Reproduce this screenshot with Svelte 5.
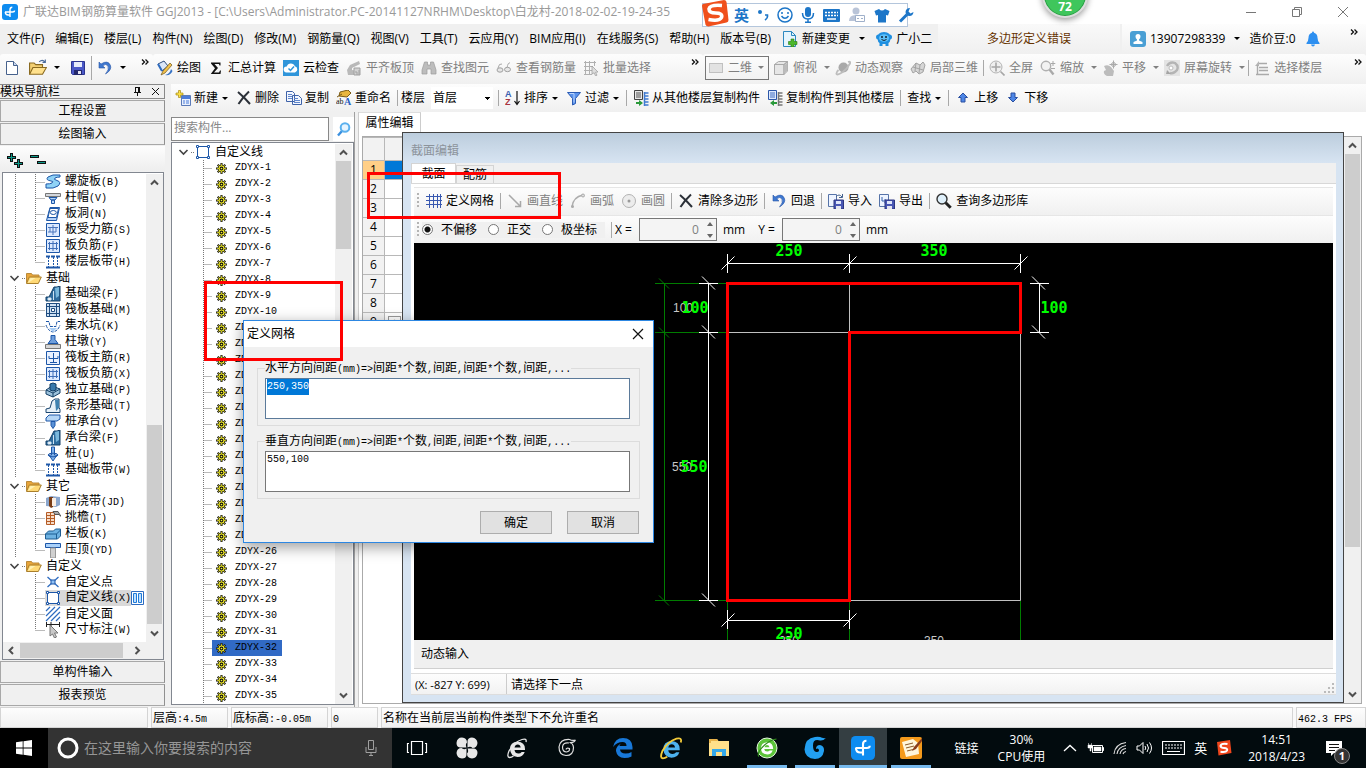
<script>
  import { onMount } from 'svelte';

  const B = '#1d57a8';
  const icons = {
    app: '<rect width="16" height="16" rx="3" fill="#0e8cf0"/><path d="M8 13V5.500q0-2.300 2.300-2.300M3 8h7.500q2 0 2-1.500M3.300 8q0 3 3 3h1.700" fill="none" stroke="#fff" stroke-width="1.400"/>',
    page: '<path d="M2.500 1.500h7l4 4v9h-11z" fill="#fff" stroke="#46618c"/><path d="M9.500 1.500v4h4" fill="#c9d8f0" stroke="#46618c"/>',
    open: '<path d="M.5 13.500v-10h4l1.500 1.500h6v3" fill="#f3cf72" stroke="#8a6a20"/><path d="M.5 13.500l3-6h12l-3.500 6z" fill="#ffe18d" stroke="#8a6a20"/><path d="M9 2.500q3-2.500 5 0M14.500 .5v2.500h-2.500" fill="none" stroke="#4c6c9c"/>',
    folder: '<path d="M.5 13V3.500h5l1 1.500h6.500v2.500" fill="#e8a53a" stroke="#b98a3a"/><path d="M.5 13.500l2.800-6.500h12l-3 6.500z" fill="#ffd976" stroke="#a97f2c"/><path d="M2 13l2.500-5h5z" fill="#fff0b0"/>',
    save: '<path d="M1.500 1.500h13v13h-12l-1-1z" fill="#4a58c8" stroke="#2c3590"/><path d="M4 2h8v5H4z" fill="#e6ebfb"/><path d="M4 10h8v5H4z" fill="#23286c"/><path d="M8 11h3v3H8z" fill="#e4e4f4"/>',
    undo: '<path d="M2 2v6h6L5.700 5.800Q9 3 11 6q1.500 3.500-2.500 8Q15 10 13.500 5.500 11-.5 4 4z" fill="#3f78d0" stroke="#2a57a8" stroke-width=".6"/>',
    paint: '<path d="M1 4l6-3 4 5-6 5z" fill="#dbe6f7" stroke="#2f4c7c"/><path d="M1 4l4 7" stroke="#2f6cc0" stroke-width="2"/><path d="M15 5l-7 8-4 2 2-4 7-8z" fill="#f2c14a" stroke="#6c5420" stroke-width=".7"/><path d="M8 15q5-1 6-6l1.500 2q-2 5-7.500 4z" fill="#3672c4"/>',
    sigma: '<path d="M3 2.500h9.500v3H11.500L11 4H6.500l3.500 4-4 4.500h5l1-2h1l-.5 3.500H2.800L7 8.300 3 3.500z" fill="#111"/>',
    cloud: '<rect width="16" height="16" fill="#2f95da"/><path d="M3.500 12.500a3 3 0 0 1 .3-6 4.200 4.200 0 0 1 8-.2 3.200 3.200 0 0 1 .2 6.200z" fill="#fff"/><path d="M5.500 8.500l2 2 3.500-4" fill="none" stroke="#2f95da" stroke-width="1.500"/>',
    align: '<path d="M1 10l3-5 9-4 1 3-8 4v2l3 .5V15H2z" fill="#b9b9b9"/><path d="M8 8h6v7H8z" fill="#d2d2d2" stroke="#a0a0a0"/><path d="M9 12h2v3M13 10v5" fill="none" stroke="#a0a0a0"/>',
    binoc: '<path d="M3.500 2h3v3h3V2h3l2.500 8v4h-5V9H6v5H1v-4z" fill="#bdbdbd" stroke="#9c9c9c" stroke-width=".7"/>',
    glasses: '<path d="M6 4Q3 3 2 8M14 3q-2-1-3 5" fill="none" stroke="#a9a9a9"/><ellipse cx="4" cy="10" rx="3" ry="2.200" fill="#e6e6e6" stroke="#a0a0a0"/><ellipse cx="11.500" cy="9.500" rx="3" ry="2.200" fill="#e6e6e6" stroke="#a0a0a0"/>',
    batch: '<path d="M1 2.500h12M1 6.500h9M1 10.500h8M1 14.500h8M2.500 1v14M6.500 1v14M11.500 1v5" stroke="#b0b0b0"/><path d="M9 6l6 6-2.500.2 1.500 3-1.500.6-1.400-3L9 14z" fill="#ddd" stroke="#999" stroke-width=".7"/>',
    flat: '<rect x="1.500" y="3.500" width="13" height="9" fill="#e2e2e2" stroke="#c0c0c0"/>',
    cube: '<path d="M1.500 4.500l4-3h9l-3.500 3zM1.500 4.500H11v10H1.500zM11 4.500l3.500-3v9.500l-3.500 3.500z" fill="#e6e6e6" stroke="#a9a9a9"/><path d="M11.500 5l3-2.500v8l-3 3z" fill="#bbb"/>',
    planet: '<circle cx="8.500" cy="7.500" r="5" fill="#a9a9a9"/><path d="M13 2q3-1 2 1.500-2.500 5-8 9-5 3-5.500 1.500T3.500 10" fill="none" stroke="#bdbdbd" stroke-width="1.800"/>',
    local: '<path d="M1 9l5-6 4 2 3-3 2 3-2 7-4 2-3-3-3 2z" fill="#d6d6d6" stroke="#a3a3a3"/><path d="M6 3l-1 8M10 5l-1 8M3 7l10 3" stroke="#a3a3a3"/>',
    full: '<circle cx="7" cy="7" r="6" fill="#efefef" stroke="#b4b4b4"/><path d="M7 2.500v9M2.500 7h9M11.500 11.500l4 4" stroke="#a6a6a6" stroke-width="1.600"/>',
    zoomi: '<circle cx="6" cy="6" r="4.700" fill="#f2f2f2" stroke="#b0b0b0" stroke-width="1.400"/><path d="M9.500 9.500l4 5" stroke="#aaa" stroke-width="2.400"/><path d="M13 1v5M10.800 3.500h4.500M11 8.500h4" stroke="#a8a8a8"/>',
    pan: '<path d="M2 6q4-2 7 1l3 4-1 5H5q-4-2-3-5l2-1z" fill="#bcbcbc"/><path d="M11.500 .5v8M7.500 4.500h8" stroke="#aaa"/><circle cx="11.500" cy="4.500" r="2" fill="none" stroke="#aaa"/>',
    rotate: '<path d="M0 0h16v16H0z" fill="#e4e4e4"/><path d="M3 6q3-5 8-3 4 3 2 7-3 4-7 3" fill="none" stroke="#b4b4b4" stroke-width="2.400"/><path d="M3 10l4 4H2z" fill="#a4a4a4"/><circle cx="7" cy="8" r="2" fill="#fff" stroke="#bbb"/>',
    floor: '<path d="M5 1L1 6h4z" fill="#b5b5b5"/><path d="M3.500 5v9M5 3.500h8M5 7.500h9M5 10.500h9M2 14.500h13" stroke="#aaa" stroke-width="1.400"/>',
    add: '<path d="M6.500 5.500h9v10h-9z" fill="#e9f0fd" stroke="#5b7ab8"/><path d="M7 6h8v3H7z" fill="#4b7cda"/><path d="M8 11h2M11 11h3M8 13h2M11 13h3" stroke="#4b7cda"/><path d="M3.500 .5h2v2.500H8v2H5.500v2.500h-2V5H1V3h2.500z" fill="#ffe34a" stroke="#a58a12" stroke-width=".7"/>',
    x: '<path d="M2 2q6 5 12 12M13 1.500Q7 7 2.500 14" fill="none" stroke="#2b3038" stroke-width="2"/>',
    copy: '<path d="M.5 1.500h6l2 2v8h-8zM6.500 5.500h6l3 3v6h-9z" fill="#f2f6fe" stroke="#3e62a8"/><path d="M2 4.500h4M2 6.500h4M2 8.500h4M8 8.500h4M8 10.500h6M8 12.500h6" stroke="#5f86cc"/>',
    rename: '<path d="M3 6l1-4 8-2 3 3-4 4z" fill="#e9b640" stroke="#7c5c16"/><path d="M1 7l5-3" stroke="#7c5c16"/><text x="0" y="14" font-family="Liberation Serif" font-size="8" fill="#111">ab</text><text x="8" y="15" font-family="Liberation Serif" font-size="10" font-weight="700" fill="#2b5fc0">A</text>',
    az: '<text x="0" y="7" font-family="Liberation Sans" font-size="9" font-weight="700" fill="#3a5fb0">A</text><text x="0" y="15" font-family="Liberation Sans" font-size="9" font-weight="700" fill="#a83440">Z</text><path d="M12 1v13M9.500 11l2.500 3.500 2.500-3.500" fill="none" stroke="#111" stroke-width="1.200"/>',
    filter: '<path d="M1.500 2.500h13L9.500 8.500v5l-3 1.500V8.500z" fill="#5b93ec" stroke="#2c5cb4"/><path d="M3.500 3.500H8v9" fill="none" stroke="#bcd6ff"/>',
    from: '<path d="M1.500 .5h8v9h-8z" fill="#e8e8e8" stroke="#444"/><path d="M3 3h5M3 5h5M3 7h5" stroke="#555"/><path d="M11 3h4.500M11 6h4.500M11 9h4.500M11 12h4.500M11 15h4.500M11.500 2v14" stroke="#3f7ad0" stroke-width="1.500"/><path d="M3 12h3v-2l4 3-4 3v-2H3z" fill="#2a9a3a"/>',
    to: '<path d="M1.500 .5h8v9h-8z" fill="#dfeafd" stroke="#2c57a8"/><path d="M3 3h5M3 5h5M3 7h5" stroke="#3f6cc0"/><path d="M11 3h4.500M11 6h4.500M11 9h4.500M11 12h4.500M11 15h4.500M11.500 2v14" stroke="#777" stroke-width="1.500"/><path d="M10 12H7v-2l-4 3 4 3v-2h3z" fill="#2a9a3a"/>',
    up: '<path d="M8 3l4.500 4.500H10V12H6V7.500H3.500z" fill="#4d86e6" stroke="#2a4fa0"/>',
    down: '<path d="M8 12L3.500 7.500H6V3h4v4.500h2.500z" fill="#4d86e6" stroke="#2a4fa0"/>',
    newdoc: '<path d="M1.500 .5h8l4 4v11h-12z" fill="#e6f5fd" stroke="#2c88c0"/><path d="M9.500 .5v4h4" fill="none" stroke="#2c88c0"/><path d="M9 8h3v2.500h3v3h-3V16H9v-2.500H6.500v-3H9z" fill="#4cb82c" stroke="#2c7a16" stroke-width=".6"/>',
    mascot: '<circle cx="2.500" cy="6" r="2.500" fill="#1f8fe0"/><circle cx="13.500" cy="6" r="2.500" fill="#1f8fe0"/><path d="M8 1q7 0 6.500 7-.3 3-2 4v3H9.500v-2h-3v2h-3v-3q-1.700-1-2-4Q1 1 8 1z" fill="#1f8fe0"/><ellipse cx="8" cy="7" rx="5" ry="3.800" fill="#5cc0f8"/><circle cx="6" cy="6" r="1" fill="#123"/><circle cx="10" cy="6" r="1" fill="#123"/><path d="M5.500 8.500q2.500 2 5 0" stroke="#123" fill="none"/>',
    user: '<rect width="16" height="16" rx="3" fill="#4a9fd4"/><path d="M5.500 5.500a2.500 2.500 0 1 1 5 0q0 2-1.500 3v1l3.500 1.500V13h-9v-2L7 9.500v-1q-1.500-1-1.500-3z" fill="#fff"/>',
    bell: '<path d="M8 .5q1 0 1 1.300 3.500 1 3.500 5 0 3 2 5.200v1H1.500v-1q2-2.200 2-5.200 0-4 3.500-5Q7 .5 8 .5z" fill="#2d8ff0"/><path d="M6 13.500h4q-.5 2-2 2t-2-2z" fill="#2d8ff0"/>',
    search: '<path d="M2 14.500l4-4.500" stroke="#3a8fdf" stroke-width="2.400"/><circle cx="9" cy="6.500" r="4.300" fill="#e6f4ff" stroke="#5ab0ee" stroke-width="2"/>',
    grid: '<path d="M3.500 1v14M7.500 1v14M11.500 1v14M14.500 1v14M0 3.500h16M0 7.500h16M0 11.500h16" stroke="#3858b0"/>',
    line: '<path d="M2 2l11 11M13.500 8v5.500H8" fill="none" stroke="#a8a8a8" stroke-width="1.500"/>',
    arc: '<path d="M2 14Q3 4 13 2" fill="none" stroke="#adadad" stroke-width="1.600"/><circle cx="13" cy="2.500" r="1.500" fill="#ddd" stroke="#aaa"/><circle cx="2.500" cy="13.500" r="1.500" fill="#aaa"/>',
    circ: '<circle cx="8" cy="8" r="6.500" fill="#ececec" stroke="#b2b2b2"/><circle cx="8" cy="8" r="1.500" fill="#999"/>',
    imp: '<path d="M.5 1.500h8v12h-8z" fill="#eef4ff" stroke="#5673a8"/><path d="M6 7h9.500v9H6z" fill="#4957b4" stroke="#2c3580"/><path d="M8 8h5v3H8z" fill="#dfe6fa"/><path d="M8 13h5v3H8z" fill="#e6e6ee"/><path d="M8 4q3-4 6 0M14.500 1v3.500H11" fill="none" stroke="#44618e"/>',
    exp: '<path d="M.5 1.500h9v12h-9z" fill="#eef4ff" stroke="#5673a8"/><path d="M3 4v4h4M5.500 6l2 2-2 2" fill="none" stroke="#3461ac"/><path d="M6 7h9.500v9H6z" fill="#4957b4" stroke="#2c3580"/><path d="M8 8h5v3H8z" fill="#dfe6fa"/><path d="M8 13h5v3H8z" fill="#e6e6ee"/>',
    query: '<circle cx="6" cy="6" r="5" fill="#dff0fb" stroke="#333" stroke-width="1.400"/><path d="M9.700 9.700l5 5" stroke="#222" stroke-width="3"/>',
    box: `<path d="M2.500 2.500h11v11h-11z" fill="#fff" stroke="${B}"/><path d="M1.500 1.500h2v2h-2zM12.500 1.500h2v2h-2zM1.500 12.500h2v2h-2zM12.500 12.500h2v2h-2z" fill="#fff" stroke="${B}"/>`,
    gear: '<path d="M8 0v16M0 8h16M2.500 2.500l11 11M13.500 2.500l-11 11" stroke="#111" stroke-width="3"/><circle cx="8" cy="8" r="5" fill="#f4ee2c" stroke="#111"/><path d="M8 1v14M1 8h14M3.200 3.200l9.600 9.600M12.800 3.200l-9.600 9.600" stroke="#f0ea24"/><circle cx="8" cy="8" r="2" fill="#f6f040" stroke="#111" stroke-width="1.500"/>',
    spiral: `<path d="M15 1Q7 0 3 3 0 6 6 7q3 0 1 2-2 1-6 1v4q8 1 12-2 4-4-1-5.500Q8 5.500 10 4q2-1 5-1z" fill="#8fd2f6" stroke="${B}"/>`,
    cap: `<path d="M.5 3.500h15v3H.5z" fill="#d2d6dc" stroke="#777"/><path d="M4 7.500h8l-2 2.500H6zM6.500 10h3v3.500h-3z" fill="#b6d5f7" stroke="${B}"/>`,
    hole: `<path d="M5 1.500h9.500l-3 13h-10z" fill="#b4d2fa" stroke="${B}"/><path d="M5 2.500h8.500l-2 9H3z" fill="#fff" stroke="${B}"/><ellipse cx="8.300" cy="6.500" rx="3" ry="2" fill="#fff" stroke="${B}"/>`,
    rebarA: `<path d="M1.500 1.500h13v13h-13z" fill="#dceaff" stroke="${B}"/><path d="M3 5.500h10M8 3v10M5 6v4h-2M11 6v4H5" fill="none" stroke="#4a76bc"/>`,
    rebarB: `<path d="M1.500 1.500h13v13h-13z" fill="#dceaff" stroke="${B}"/><path d="M3 5.500h10M3 10.500h10M8 3v10M4.500 4v8M11.500 4v8" stroke="#3f6fb8"/>`,
    rebarC: `<path d="M1.500 1.500h13v13h-13z" fill="#eaf2ff" stroke="${B}"/><path d="M8.500 3v10M4 6v2.500h9V6M5 12.500h7" fill="none" stroke="${B}"/>`,
    strip: `<path d="M1 2.500h4M6 2.500h4M11 2.500h4M1 13.500h14" stroke="${B}" stroke-width="2"/><path d="M3.500 3v10M8.500 3v10M12.500 3v10" stroke="${B}" stroke-dasharray="2 1"/>`,
    beam: `<path d="M1 15V11h3L9 1h3l3-1v15z" fill="#2e6c9e" stroke="#123e66"/><path d="M10 2l4-1v9l-3 2z" fill="#7ab8dc"/><path d="M3 14v-2h3v2zM8.500 5v9" fill="#fff" stroke="#cfe3f2"/>`,
    raft: `<path d="M1.500 1.500h13v13h-13z" fill="#cfe2f4" stroke="#1e4c80"/><path d="M4.500 1v14M11.500 1v14M1 4.500h14M1 11.500h14" stroke="#1e4c80"/><path d="M6.500 6.500h3v3h-3z" fill="#fff" stroke="#1e4c80"/>`,
    pit: `<path d="M1 3.500h3l1 5h6l1-5h3M1 7q2 6 7 7 5-1 7-7" fill="none" stroke="${B}" stroke-dasharray="3 1"/><path d="M4 10l4 4 4-4z" fill="#a8cdf5"/>`,
    pier: `<path d="M6 1.500h4v4l3 4H3l3-4z" fill="#6f9fdc" stroke="${B}"/><path d="M.5 10.500h15v4H.5z" fill="#d6d6d6" stroke="#777"/>`,
    foot: '<path d="M1 8l6-4 8 3v4l-7 4-7-3z" fill="#9cc2dc" stroke="#123e66"/><path d="M5 2l3-1 3 1v6L8 9 5 8z" fill="#3a7aac" stroke="#123e66"/><path d="M1 8l7 3 7-4M8 11v4" fill="none" stroke="#123e66"/>',
    strap: '<path d="M1 14.500V11l4-1 2-7 3-2h4v9l1 1v3.500z" fill="#e7f1f8" stroke="#1b4670"/><path d="M10 2h4v8l-3 3z" fill="#3f82b0"/>',
    pilecap: `<path d="M1 4l3-3h11v4l-3 2H1z" fill="#b7d7f6" stroke="${B}"/><path d="M6 7.500h4v4l-2 3-2-3z" fill="#5b91d6" stroke="${B}"/>`,
    pile: `<path d="M6.500 1h3v8H12l-4 6-4-6h2.500z" fill="#7fb0ea" stroke="${B}"/><ellipse cx="8" cy="9" rx="5" ry="1.800" fill="none" stroke="${B}"/>`,
    pour: '<path d="M1 4l5-2 9 1v8l-4 2-10-1z" fill="#8ba6cc"/><path d="M4 3h4v10l-2 1-2-2z" fill="#7a3c14"/><path d="M7 4h4v8H7z" fill="#fbeee2"/>',
    eave: '<path d="M1.500 2.500h8v12h-8z" fill="#f7dcc8" stroke="#b55c26"/><path d="M1.500 5.500h8M1.500 8.500h8M1.500 11.500h8M5.500 2.500v12" stroke="#b55c26"/><path d="M8 1.500h5l3 5-2-2h-4z" fill="#aaa" stroke="#555"/>',
    rail: '<path d="M.5 8l3-3h5l2-2h5v7l-3 3H.5z" fill="#6db2e2" stroke="#1d5c92"/><path d="M.5 8h11v5M11.500 8l4-4" fill="none" stroke="#1d5c92"/>',
    coping: `<path d="M.5 1.500h15v4H.5z" fill="#a8d0fa" stroke="${B}"/><path d="M5.500 6h5v10h-5z" fill="#d0d0d0" stroke="#999"/>`,
    pt: `<path d="M2.500 3l11 10M13.500 3l-11 10" stroke="#2d6bc0" stroke-width="1.300"/><path d="M6 6h4v4H6z" fill="#8fc0f4" stroke="${B}"/>`,
    hatch: '<path d="M1 5l4-4M1 10l9-9M1 15L15 1M6 15l9-9M11 15l4-4" stroke="#2d6bc0" stroke-width="1.200"/>',
    dim: '<path d="M1.500 0v5M14.500 0v5M6 0v5M1 2.500h14" stroke="#222"/><path d="M5 3l8 8H9.500l2 4-2 1-2-4L5 14z" fill="#c9c9c9" stroke="#777"/>'
  };

  const menus = ['文件(F)', '编辑(E)', '楼层(L)', '构件(N)', '绘图(D)', '修改(M)', '钢筋量(Q)', '视图(V)', '工具(T)', '云应用(Y)', 'BIM应用(I)', '在线服务(S)', '帮助(H)', '版本号(B)'];

  const drawTools = [
    ['paint', '绘图'], ['sigma', '汇总计算'], ['cloud', '云检查'],
    ['align', '平齐板顶', 1], ['binoc', '查找图元', 1], ['glasses', '查看钢筋量', 1], ['batch', '批量选择', 1]
  ].map(([icon, label, off]) => ({ icon, label, off }));

  const viewTools = [
    { icon: 'cube', label: '俯视', drop: true, off: 1 },
    { icon: 'planet', label: '动态观察', off: 1 },
    { icon: 'local', label: '局部三维', off: 1 },
    { sep: true },
    { icon: 'full', label: '全屏', off: 1 },
    { icon: 'zoomi', label: '缩放', drop: true, off: 1 },
    { icon: 'pan', label: '平移', drop: true, off: 1 },
    { icon: 'rotate', label: '屏幕旋转', drop: true, off: 1 },
    { sep: true },
    { icon: 'floor', label: '选择楼层', off: 1 }
  ];

  const partTools = [
    { icon: 'add', label: '新建', drop: true },
    { icon: 'x', label: '删除' },
    { icon: 'copy', label: '复制' },
    { icon: 'rename', label: '重命名' },
    { sep: true }
  ];

  const partTools2 = [
    { sep: true },
    { icon: 'az', label: '排序', drop: true },
    { icon: 'filter', label: '过滤', drop: true },
    { sep: true },
    { icon: 'from', label: '从其他楼层复制构件' },
    { icon: 'to', label: '复制构件到其他楼层' },
    { sep: true },
    { label: '查找', drop: true },
    { sep: true },
    { icon: 'up', label: '上移' },
    { icon: 'down', label: '下移' }
  ];

  const tree = [
    { items: [['spiral', '螺旋板(B)'], ['cap', '柱帽(V)'], ['hole', '板洞(N)'], ['rebarA', '板受力筋(S)'], ['rebarB', '板负筋(F)'], ['strip', '楼层板带(H)']] },
    { name: '基础', items: [['beam', '基础梁(F)'], ['raft', '筏板基础(M)'], ['pit', '集水坑(K)'], ['pier', '柱墩(Y)'], ['rebarC', '筏板主筋(R)'], ['rebarB', '筏板负筋(X)'], ['foot', '独立基础(P)'], ['strap', '条形基础(T)'], ['pilecap', '桩承台(V)'], ['beam', '承台梁(F)'], ['pile', '桩(U)'], ['strip', '基础板带(W)']] },
    { name: '其它', items: [['pour', '后浇带(JD)'], ['eave', '挑檐(T)'], ['rail', '栏板(K)'], ['coping', '压顶(YD)']] },
    { name: '自定义', items: [['pt', '自定义点'], ['box', '自定义线(X)'], ['hatch', '自定义面'], ['dim', '尺寸标注(W)']] }
  ];

  const parts = Array.from({ length: 35 }, (_, i) => i + 1).filter((n) => n !== 18);
  const rows = Array.from({ length: 9 }, (_, i) => i + 1);

  const ticksTop = [727.5, 849.5, 1020.5];
  const ticksSide = [283.5, 332.5, 600.5];

  let horizontal = $state('250,350');
  let vertical = $state('550,100');
  let offset = $state('none');
  let first;

  onMount(() => {
    first.focus();
    first.select();
  });
</script>

{#snippet icon(name, size = 16)}<svg class="ic" width={size} height={size} viewBox="0 0 16 16" aria-hidden="true">{@html icons[name]}</svg>{/snippet}

{#snippet mix(text)}{#each text.split(/([\x20-\x7e]+)/) as part, i}{#if part}<span class={i % 2 ? 'latin' : 'han'}>{part}</span>{/if}{/each}{/snippet}

{#snippet tool(t)}{#if t.sep}<i class="sep"></i>{:else}<button class="tool" class:off={t.off}>{#if t.icon}{@render icon(t.icon)}{/if}<span>{t.label}</span>{#if t.drop}<i class="drop"></i>{/if}</button>{/if}{/snippet}

{#snippet chev(d)}<svg width="17" height="17" viewBox="0 0 17 17" aria-hidden="true"><path {d} fill="none" stroke="#505050" stroke-width="2" /></svg>{/snippet}

{#snippet vscroll(a, b, c)}
  <div class="vscroll">
    {@render chev('M5 10.500l3.500-3.500 3.500 3.500')}
    <i style="flex:{a}"></i><i class="thumb" style="flex:{b}"></i><i style="flex:{c}"></i>
    {@render chev('M5 6.500l3.500 3.500 3.500-3.500')}
  </div>
{/snippet}

{#snippet more()}<svg class="more" width="8" height="7" viewBox="0 0 8 7" aria-hidden="true"><path d="M1 .5l2.500 2.500L1 5.500M4.500 .5L7 3 4.500 5.500" fill="none" stroke="#111" stroke-width="1.300" /></svg>{/snippet}

<div class="app">
  <header class="titlebar">
    {@render icon('app')}
    <h1>广联达BIM钢筋算量软件 GGJ2013 - [C:\Users\Administrator.PC-20141127NRHM\Desktop\白龙村-2018-02-02-19-24-35</h1>
    <div class="winctl">
      <button aria-label="最小化"><svg width="12" height="12"><path d="M1 6.500h10" stroke="#777" /></svg></button>
      <button aria-label="还原"><svg width="12" height="12"><path d="M1.500 3.500h7v7h-7zM3.500 3.500v-2h7v7h-2" fill="none" stroke="#777" /></svg></button>
      <button aria-label="关闭"><svg width="12" height="12"><path d="M1 1l10 10M11 1L1 11" stroke="#777" /></svg></button>
    </div>
  </header>

  <nav class="menubar">
    <div class="menus">
      {#each menus as m}<button>{m}</button>{/each}
      <button class="tool">{@render icon('newdoc')}<span>新建变更</span><i class="drop wide"></i></button>
      <button class="tool">{@render icon('mascot')}<span>广小二</span></button>
    </div>
    <div class="notice">多边形定义错误</div>
    <div class="account">
      <button class="tool">{@render icon('user')}<span>13907298339</span><i class="drop wide"></i></button>
      <span>造价豆:0</span>
      {@render icon('bell')}
      {@render more()}
    </div>
  </nav>

  <div class="toolbar">
    <div class="band files">
      {@render icon('page')}
      <span class="pair">{@render icon('open', 18)}<i class="drop"></i></span>
      {@render icon('save')}
      <i class="sep"></i>
      <span class="pair">{@render icon('undo')}<i class="drop"></i></span>
      {@render more()}
    </div>
    <div class="band draw">
      {#each drawTools as t}{@render tool(t)}{/each}
      {@render more()}
    </div>
    <div class="band view">
      <button class="tool off combo2d">{@render icon('flat')}<span>二维</span><i class="drop"></i></button>
      {#each viewTools as t}{@render tool(t)}{/each}
      {@render more()}
    </div>
  </div>

  <main>
    <aside class="nav">
      <div class="navhead">
        <span>模块导航栏</span>
        <svg width="9" height="9" viewBox="0 0 9 9" aria-hidden="true"><path d="M2.500 0v5M2 .5h4.500M5.500 0v5M6.500 0v5M1 5.500h7M4.500 6v3" fill="none" stroke="#111" /></svg>
        <svg width="9" height="9" viewBox="0 0 9 9" aria-hidden="true"><path d="M1 1l7 7M8 1L1 8" stroke="#111" /></svg>
      </div>
      <button class="wide">工程设置</button>
      <button class="wide">绘图输入</button>
      <div class="expand">
        <svg width="40" height="18" viewBox="0 0 40 18" aria-hidden="true"><path d="M0 5.500h9M4.500 1v9M7 11.500h9M11.500 7v9M23 4.500h9M30 10.500h9" stroke="#111" stroke-width="3" /><path d="M1 5.500h7M4.500 2v7M8 11.500h7M11.500 8v7M24 4.500h7M31 10.500h7" stroke="#0b9a8a" /></svg>
      </div>
      <div class="treebox">
        <div class="treeview">
          <ul class="tree">
            {#each tree as g, gi}
              {#if g.name}
                <li>
                  <svg width="23" height="16" aria-hidden="true"><path d="M7.500 6l4 4 4-4" fill="none" stroke="#444" stroke-width="1.600" /><path d="M19 8.500h4" stroke="#777" stroke-dasharray="1 1" /></svg>
                  {@render icon('folder')}<span class="label">{g.name}</span>
                </li>
              {/if}
              {#each g.items as [ic, name], i}
                <li class:picked={ic === 'box'}>
                  <svg width="42" height="16" aria-hidden="true"><path d="{gi < 3 ? 'M12.500 0V16' : ''}M32.500 0V{i === g.items.length - 1 ? 8 : 16}M32.500 8.500H42" stroke="#777" stroke-dasharray="1 1" /></svg>
                  <span class="hit">{@render icon(ic)}<span class="label">{@render mix(name)}</span></span>
                  {#if ic === 'box'}<svg class="cols" width="13" height="14" aria-hidden="true"><path d="M.5 .5h12v13H.5z" fill="#fff" stroke="#2d6bc0" /><path d="M2.500 2.500h3v9h-3zM7.500 2.500h3v9h-3z" fill="#bfe0ff" stroke="#1f7ad8" /></svg>{/if}
                </li>
              {/each}
            {/each}
          </ul>
          {@render vscroll(235, 199, 1)}
        </div>
        <div class="hscroll">
          {@render chev('M10 5L6.500 8.500 10 12')}
          <i class="thumb" style="flex:102"></i><i style="flex:6"></i>
          {@render chev('M6.500 5l3.500 3.500L6.500 12')}
          <i class="corner"></i>
        </div>
      </div>
      <button class="wide">单构件输入</button>
      <button class="wide">报表预览</button>
    </aside>

    <section class="work">
      <div class="parttools">
        {#each partTools as t}{@render tool(t)}{/each}
        <label for="floor">楼层</label>
        <select id="floor"><option>首层</option></select>
        {#each partTools2 as t}{@render tool(t)}{/each}
      </div>
      <div class="panes">
        <div class="partlist">
          <div class="find">
            <input aria-label="搜索构件" placeholder="搜索构件..." />
            <button aria-label="搜索">{@render icon('search')}</button>
          </div>
          <div class="partbox">
            <ul class="parts">
              <li class="root">
                <svg width="23" height="16" aria-hidden="true"><path d="M7.500 6l4 4 4-4" fill="none" stroke="#444" stroke-width="1.600" /><path d="M19 8.500h4" stroke="#777" stroke-dasharray="1 1" /></svg>
                {@render icon('box')}<span class="label">自定义线</span>
              </li>
              {#each parts as n}
                <li class:sel={n === 32}>
                  <svg width="40" height="16" aria-hidden="true"><path d="M31.500 0V16M31.500 8.500H40" stroke="#777" stroke-dasharray="1 1" /></svg>
                  <span class="hit">{@render icon('gear', 11)}<span class="latin">ZDYX-{n}</span></span>
                </li>
              {/each}
            </ul>
            {@render vscroll(0, 88, 437)}
          </div>
        </div>
        <div class="props">
          <div class="proptab">属性编辑</div>
          <div class="propbox">
            <table>
              <thead><tr><th></th><th></th></tr></thead>
              <tbody>
                {#each rows as r}<tr class:cur={r === 1}><th>{r}</th><td>{#if r === 9}<i class="plus">+</i>{/if}</td></tr>{/each}
              </tbody>
            </table>
            {@render vscroll(0, 388, 137)}
          </div>
        </div>
      </div>
    </section>
  </main>

  <footer class="status">
    <span class="c1"></span>
    <span class="c2">{@render mix('层高:4.5m')}</span>
    <span class="c3">{@render mix('底标高:-0.05m')}</span>
    <span class="c4">{@render mix('0')}</span>
    <span class="c5">名称在当前层当前构件类型下不允许重名</span>
    <span class="c6">{@render mix('462.3 FPS')}</span>
  </footer>

  <footer class="taskbar">
    <button class="start" aria-label="开始"><svg width="16" height="16" viewBox="0 0 16 16"><path d="M0 2.300L6.700 1.300v6.200H0zM7.500 1.200L16 0v7.500H7.500zM0 8.400h6.700v6.300L0 13.800zM7.500 8.400H16V16l-8.500-1.200z" fill="#fff" /></svg></button>
    <div class="cortana">
      <svg width="22" height="22" aria-hidden="true"><circle cx="11" cy="11" r="9" fill="none" stroke="#fff" stroke-width="3" /></svg>
      <input aria-label="搜索" placeholder="在这里输入你要搜索的内容" />
      <svg width="12" height="18" viewBox="0 0 12 18" aria-hidden="true"><path d="M3.500 1.500h5v9h-5zM1 8v5.500h10V8M6 14v3M4 16.500h4" fill="none" stroke="#a0a0a0" /></svg>
    </div>
    <div class="apps first">
      <button aria-label="任务视图"><svg width="22" height="16"><path d="M5.500 1.500h11v13h-11zM3 3.500H1.500v9H3M19 3.500h1.500v9H19" fill="none" stroke="#fff" stroke-width="1.200" /></svg></button>
      <button aria-label="四叶"><svg width="22" height="22" viewBox="0 0 22 22"><g fill="#e8e8e8"><path d="M10.500 10.500H4Q.5 10 .5 6 1 .5 6 .5q5 .5 5 5-2 2-.5 5z" /><path d="M11.500 10.500V4Q12 .5 16 .5q5 .5 5.500 5.500-.5 5-5 5-2-2-5-.5z" /><path d="M11.500 11.500H18q3.500.5 3.500 4.500-.5 5-5.500 5.500-5-.5-5-5 2-2 .5-5z" /><path d="M10.500 11.500V18q-.5 3.500-4.500 3.500-5-.5-5.500-5.500.5-5 5-5 2 2 5 .5z" /></g></svg></button>
      <button aria-label="浏览器"><svg width="22" height="22" viewBox="0 0 22 22"><path d="M4 12q0-7 7.500-7.500Q19 5 19 12v1H8.500q.5 3.500 4 3.500 2 0 3.200-1.500h3Q17 20 11.500 20 4.500 19.500 4 12zm4.500-1.500h6.200q-.5-3-3-3t-3.200 3z" fill="#e8e8e8" /><path d="M20 5q1-4-4-2.500Q8 5 3 14q-2.500 6 .5 6.500 2 0 4-1.500" fill="none" stroke="#e8e8e8" stroke-width="1.300" /></svg></button>
      <button aria-label="G"><svg width="20" height="20" viewBox="0 0 20 20"><path d="M18.500 2q-3 1-6-.5Q3 1 2 9q0 8 7 8.500 7.500 0 7.500-8Q16 5 12.500 4.500 17 5 18.500 2M12 5Q6 4 5.500 9q0 5 4 5 3.500-.5 3-3.500-3-1-3.500 1" fill="none" stroke="#e0e0e0" stroke-width="1.200" /></svg></button>
    </div>
    <div class="apps second">
      <button aria-label="Edge"><svg width="22" height="22" viewBox="0 0 22 22"><path d="M1 10Q3 1 11 1q9 0 9.500 9v2.500H8q.5 4 5.500 4 3.500 0 6-1.500v4.500q-3 1.500-7 1.500Q5 20.500 4 14q0-5 5-7.500Q7.500 7.500 7.500 9h7q0-4-4-4Q5 5 1 10z" fill="#1878d8" /></svg></button>
      <button aria-label="IE"><svg width="24" height="24" viewBox="0 0 22 22"><path d="M4 12q0-7 7.500-7.500Q19 5 19 12v1H8.500q.5 3.500 4 3.500 2 0 3.200-1.500h3Q17 20 11.500 20 4.500 19.500 4 12zm4.500-1.500h6.200q-.5-3-3-3t-3.200 3z" fill="#4db2ee" /><path d="M20 6q1.500-5-4-3.500Q8 5 3 14q-2.500 6 .5 6.500 2 0 4-1.500" fill="none" stroke="#f4cc3a" stroke-width="1.700" /></svg></button>
      <button aria-label="文件资源管理器"><svg width="22" height="20" viewBox="0 0 22 20"><path d="M1 1h8l1.500 2H21v15H1z" fill="#ffe08a" /><path d="M1 1h8l1 2H3v2H1z" fill="#e8b34a" /><path d="M4 18v-7h14v7h-4v-4H8v4z" fill="#35a8e8" /></svg></button>
      <button class="run" aria-label="360浏览器"><svg width="22" height="22" viewBox="0 0 22 22"><circle cx="11" cy="11" r="10" fill="#5cc43a" stroke="#e6f8e0" /><path d="M5 11.500q0-6 6-6.200 6 .2 6.200 6.700h-9q.3 2.500 3 2.500 1.500 0 2.500-1h3q-1.500 4-5.500 4-6-.2-6.200-6zm3.500-1.200h5q-.5-2.200-2.500-2.200t-2.500 2.200z" fill="#fff" /><path d="M20.500 2Q12 3 4 13q-3 5-1 6.500" fill="none" stroke="#2f8a1c" stroke-width="1.200" /></svg></button>
      <button class="run" aria-label="广联达"><svg width="24" height="24" viewBox="0 0 24 24"><path d="M23 2q-3 3-6 2.500-7-2-7 5 0 7 4 6.500 3-.5 1.500-3-1-1-2.500 0 0-4 4-4 4.500 1 4 6-1.500 8-9 8-10-.5-10.500-9.500Q2 2 12 1q5-.5 7 .8Q21 2.500 23 2z" fill="#229ff0" /></svg></button>
      <button class="run on" aria-label="GGJ2013">{@render icon('app', 24)}</button>
      <button class="run" aria-label="便笺"><svg width="24" height="24" viewBox="0 0 24 24"><rect x="1" y="1" width="22" height="22" rx="2" fill="#f49a1c" /><path d="M3 6l11-3 5 4 1 11-13 3z" fill="#fff6dc" /><path d="M6 9l8-2M7 12l8-2M8 15l6-1.500" stroke="#8a5a2a" /><path d="M23 2l-8 9-2 4 4-2 6-8z" fill="#8a3c1a" /></svg></button>
    </div>
    <div class="tray">
      <span class="link">链接</span>
      <span class="two">30%<br />CPU使用</span>
      <svg class="caret" width="14" height="8" aria-hidden="true"><path d="M1 7l6-5.500L13 7" fill="none" stroke="#fff" stroke-width="1.300" /></svg>
      <svg class="bat" width="17" height="14" viewBox="0 0 17 14" aria-hidden="true"><path d="M5.500 4.500h10v7h-10z" fill="none" stroke="#fff" /><path d="M7 6h7v4H7zM16 6.500h1v3h-1zM1 4h4v3H4v3H3V7H1zM1.500 2v2M4.500 2v2" fill="#fff" stroke="#fff" stroke-width=".5" /></svg>
      <svg width="14" height="14" viewBox="0 0 14 14" aria-hidden="true"><path d="M1 13Q2 3 13 1.500M4 13Q5 6 13 4.500M7 13q1-5 6-5.500M10 13q.5-2 3-2.500" fill="none" stroke="#ddd" stroke-width="1.100" /></svg>
      <svg width="17" height="14" viewBox="0 0 17 14" aria-hidden="true"><path d="M1 5h2.500L7 1.500v11L3.500 9H1zM9 5q1.500 2 0 4M11 3q3 4 0 8M13.500 1.500q4 5.500 0 11" fill="none" stroke="#fff" /></svg>
      <svg width="23" height="14" viewBox="0 0 23 14" aria-hidden="true"><path d="M.5 .5h22v13H.5z" fill="none" stroke="#fff" stroke-width="1.200" /><path d="M3 4h17M3 7h17" stroke="#fff" stroke-dasharray="2 1" /><path d="M5 10.500h13" stroke="#fff" /></svg>
      <span class="ime">英</span>
      <svg width="16" height="16" viewBox="0 0 16 16" aria-hidden="true"><path d="M1 2l13-2 1.500 13-13 2.500z" fill="#f0461c" /><path d="M11.500 4Q5 3 4.500 6q.5 2 3.500 2 4 .3 3 2.500-1 2-6.500 1.200" fill="none" stroke="#fff" stroke-width="2" /></svg>
      <span class="two time">14:51<br />2018/4/23</span>
      <svg class="note" width="26" height="26" viewBox="0 0 26 26" aria-hidden="true"><path d="M1 1h16v12H9l-3 3v-3H1z" fill="#fff" /><path d="M4 4.500h10M4 7.500h10M4 10.500h6" stroke="#111" /><circle cx="17" cy="16" r="7.500" fill="#333" stroke="#888" /><text x="17" y="20" font-family="Open Sans" font-size="11" font-weight="700" fill="#fff" text-anchor="middle">1</text></svg>
    </div>
  </footer>

  <section class="editor" aria-label="截面编辑">
    <h2>截面编辑</h2>
    <div class="client">
      <div class="tabs"><button class="on">截面</button><button>配筋</button></div>
      <div class="edit">
        <div class="edtools">
          <i class="grip"></i>
          {@render tool({ icon: 'grid', label: '定义网格' })}
          <i class="sep"></i>
          {@render tool({ icon: 'line', label: '画直线', off: 1 })}
          {@render tool({ icon: 'arc', label: '画弧', off: 1 })}
          {@render tool({ icon: 'circ', label: '画圆', off: 1 })}
          <i class="sep"></i>
          {@render tool({ icon: 'x', label: '清除多边形' })}
          <i class="sep"></i>
          {@render tool({ icon: 'undo', label: '回退' })}
          <i class="sep"></i>
          {@render tool({ icon: 'imp', label: '导入' })}
          {@render tool({ icon: 'exp', label: '导出' })}
          <i class="sep"></i>
          {@render tool({ icon: 'query', label: '查询多边形库' })}
        </div>
        <div class="edtools coords">
          <i class="grip"></i>
          <div class="radios">
            <label><input type="radio" bind:group={offset} value="none" />不偏移</label>
            <label><input type="radio" bind:group={offset} value="ortho" />正交</label>
            <label><input type="radio" bind:group={offset} value="polar" />极坐标</label>
          </div>
          <i class="sep"></i>
          {#each ['X', 'Y'] as axis}
            <label class="axis" for="axis{axis}">{axis} =</label>
            <span class="spin"><input id="axis{axis}" value="0" /><svg width="8" height="16" aria-hidden="true"><path d="M4 0l3 4H1zM4 16l3-4H1z" fill="#666" /></svg></span>
            <span class="unit">mm</span>
          {/each}
        </div>
        <svg class="canvas" aria-label="截面图">
          <g transform="translate(-414 -243)" fill="none">
            <g stroke="#007c00">
              <path d="M664.500 283V601M655 283.500h72M655 332.500h72M655 600.500h72M727.500 601v40M849.500 601v40M1020.500 601v40" />
              {#each ticksSide as y}<path d="M659 {y - 5}l10 10" />{/each}
            </g>
            <path d="M849.500 283v49M727 332.500h122M1020.500 332V600.500H849" stroke="#c0c0c0" />
            <g stroke="#fff">
              <path d="M727.500 263.500h293M708.500 283v318M727.500 620.500h122M1039.500 283v50" />
              {#each ticksTop as x}<path d="M{x} 254v19M{x - 6} 269.500l13-13" />{/each}
              {#each ticksSide as y}<path d="M699 {y}h19M702 {y - 7}l13 13" />{/each}
              {#each ticksTop.slice(0, 2) as x}<path d="M{x} 610v19M{x - 6} 626.500l13-13" />{/each}
              {#each ticksSide.slice(0, 2) as y}<path d="M1030 {y}h19M1032 {y - 7}l13 13" />{/each}
            </g>
            <path d="M727.500 283.500h293v49h-171v268h-122z" stroke="#f00" stroke-width="3" />
            <g class="grey"><text x="683" y="312">100</text><text x="682" y="471">550</text><text x="789" y="645">250</text><text x="934" y="645">350</text></g>
            <g class="green"><text x="789" y="256">250</text><text x="934" y="256">350</text><text x="695" y="313">100</text><text x="1054" y="313">100</text><text x="694" y="472">550</text><text x="789" y="639">250</text></g>
          </g>
        </svg>
        <div class="dyn">动态输入</div>
      </div>
      <div class="edstatus">
        <span class="xy">(X: -827 Y: 699)</span><span class="prompt">请选择下一点</span>
        <svg width="12" height="12" aria-hidden="true"><path d="M8 1h2v2H8zM4 5h2v2H4zM8 5h2v2H8zM0 9h2v2H0zM4 9h2v2H4zM8 9h2v2H8z" fill="#bbb" /></svg>
      </div>
    </div>
  </section>

  <section class="dialog" role="dialog" aria-label="定义网格">
    <header><span>定义网格</span><button aria-label="关闭"><svg width="12" height="12"><path d="M1 1l10 10M11 1L1 11" stroke="#111" stroke-width="1.200" /></svg></button></header>
    <fieldset><legend><label for="hgap">{@render mix('水平方向间距(mm)=>间距*个数,间距,间距*个数,间距,...')}</label></legend><textarea id="hgap" bind:this={first} bind:value={horizontal}></textarea></fieldset>
    <fieldset><legend><label for="vgap">{@render mix('垂直方向间距(mm)=>间距*个数,间距,间距*个数,间距,...')}</label></legend><textarea id="vgap" bind:value={vertical}></textarea></fieldset>
    <div class="actions"><button>确定</button><button>取消</button></div>
  </section>

  <div class="sogou">
    <svg class="slogo" width="28" height="28" viewBox="0 0 28 28" aria-hidden="true"><path d="M2 5l21-4q2 0 2.500 2l2 18q0 2-2 2.500l-18 4q-2.500 0-3-2L1 7q0-1.500 1-2z" fill="#f0501c" /><path d="M21 6.500q-12-1-13 3.500 0 4 6.500 4 7.500 0 6 4.500-2 4-13 2" fill="none" stroke="#fff" stroke-width="3.600" /></svg>
    <b>英</b>
    <svg width="12" height="14" aria-hidden="true"><circle cx="3" cy="4" r="2" fill="#1d76c8" /><path d="M8 7h2.500q.5 3-2.500 5" fill="none" stroke="#1d76c8" stroke-width="1.600" /></svg>
    <svg width="16" height="16" aria-hidden="true"><circle cx="8" cy="8" r="7" fill="none" stroke="#1d76c8" stroke-width="1.500" /><path d="M5 5v2M11 5v2M4.500 9q3.500 4.500 7 0" fill="none" stroke="#1d76c8" stroke-width="1.500" /></svg>
    <svg width="14" height="16" aria-hidden="true"><rect x="4" width="6" height="10" rx="3" fill="#1d76c8" /><path d="M1.500 6q0 6 5.500 6t5.500-6M7 12v4M4 15.200h6" fill="none" stroke="#1d76c8" stroke-width="1.500" /></svg>
    <svg width="17" height="13" aria-hidden="true"><rect width="17" height="13" rx="1" fill="#1d76c8" /><path d="M2 3.500h13M2 6.500h13" stroke="#fff" stroke-width="1.500" stroke-dasharray="2 1" /><path d="M4 10h9" stroke="#fff" stroke-width="1.500" /></svg>
    <svg width="18" height="16" aria-hidden="true"><circle cx="8" cy="4" r="3.500" fill="#b9c4d8" /><path d="M1 14q0-6 7-6l3 1v5z" fill="#b9c4d8" /><path d="M7.500 8.500h9v6h-9z" fill="#fff" stroke="#9fb0ca" /><path d="M9 11.500h2M13 11.500h2" stroke="#9fb0ca" /></svg>
    <svg width="16" height="15" aria-hidden="true"><path d="M5 1q3 3 6 0l4.500 2-1.500 4.500-2-.5v7.500H4V7l-2 .5L.5 3z" fill="#1d76c8" /></svg>
    <svg width="16" height="16" aria-hidden="true"><path d="M2 14.500l7-7" stroke="#1d76c8" stroke-width="3" /><path d="M12 1Q8 1 7.500 5q.5 4 4 4 3.500 0 4-4l-3 1.500-2-2z" fill="#1d76c8" /></svg>
  </div>

  <div class="score">72</div>
  <div class="mark one"></div>
  <div class="mark two-m"></div>
</div>

<style>
  :global(body) { margin: 0; overflow: hidden; }
  .app { position: relative; display: flex; flex-direction: column; height: 100vh; overflow: hidden; background: #f0f0f0; color: #000; font: 12px/16px 'Open Sans', 'Noto Sans CJK SC', sans-serif; white-space: nowrap; }
  .app :is(button, input, select, textarea) { font: inherit; color: inherit; box-sizing: border-box; }
  button { border: 0; background: none; padding: 0; }
  ul { list-style: none; margin: 0; padding: 0; }
  h1, h2 { font: inherit; margin: 0; }
  svg { flex: none; display: block; }
  .latin { font: 10px/16px 'Liberation Mono', monospace; white-space: pre; }
  .han, .label { line-height: 16px; }

  .titlebar { display: flex; align-items: center; gap: 5px; height: 24px; padding-left: 2px; background: #fff; color: #999; flex: none; }
  .titlebar h1 { flex: 1; }
  .winctl { display: flex; }
  .winctl button { width: 46px; height: 20px; display: grid; place-items: center; }

  .menubar { display: flex; gap: 2px; height: 30px; flex: none; padding-bottom: 1px; box-sizing: border-box; }
  .menus { display: flex; align-items: center; gap: 11px; width: 936px; padding-left: 7px; box-sizing: border-box; flex: none; }
  .notice { width: 182px; display: grid; place-items: center; color: #630; background: linear-gradient(#f9f9f9, #f0f0f0); }
  .account { flex: 1; display: flex; align-items: center; gap: 9px; padding: 0 8px; background: linear-gradient(#fdfdfd, #f0f0f0); }
  .more { margin-left: auto; align-self: flex-start; margin-top: 5px; }

  .tool { display: flex; align-items: center; gap: 4px; line-height: 16px; }
  .tool.off { color: #808080; }
  .drop { width: 0; border: 3px solid transparent; border-top-color: currentColor; border-bottom: 0; margin: 0 1px; }
  .drop.wide { margin: 0 0 0 5px; }
  .sep { width: 1px; height: 16px; background: #a8a8a8; }

  .toolbar { display: flex; height: 30px; flex: none; }
  .band { display: flex; align-items: center; padding: 0 4px 3px; gap: 7px; background: linear-gradient(#fdfdfd, #f0f0f0); box-sizing: border-box; border-radius: 3px; }
  .files { width: 153px; gap: 9px; }
  .files .sep { height: 24px; margin: 0 -4px; }
  .pair { display: flex; align-items: center; gap: 6px; }
  .draw { width: 550px; }
  .view { flex: 1; padding-left: 2px; }
  .view .drop { margin: 0 -2px 0 3px; }
  .view .sep { margin: 0 -2px; }
  .combo2d { border: 1px solid #777; height: 24px; padding: 0 4px 0 2px; margin-right: -3px; }
  .combo2d .drop { margin: 0 0 0 2px; }
  .band .more { margin-top: 5px; }

  main { flex: 1; display: flex; gap: 6px; min-height: 0; }
  .nav { width: 165px; flex: none; display: flex; flex-direction: column; gap: 1px; padding-bottom: 1px; }
  .navhead { display: flex; align-items: center; gap: 9px; height: 15px; border: 1px solid #888; border-left: 0; padding-right: 4px; box-sizing: border-box; line-height: 14px; }
  .navhead span { flex: 1; }
  .nav .wide { height: 22px; border: 1px solid #a8a8a8; border-right-color: #909090; background: #f0f0f0; line-height: 20px; flex: none; }
  .expand { height: 25px; padding: 6px 7px 0; background: linear-gradient(#fdfdfd, #eee); box-sizing: border-box; flex: none; }
  .treebox { flex: 1; min-height: 0; display: flex; flex-direction: column; margin: 0 1px 0 2px; border: 1px solid #828790; background: #fff; }
  .treeview { flex: 1; min-height: 0; display: flex; padding-top: 1px; }
  .tree { flex: 1; overflow: hidden; }
  .tree li, .parts li { display: flex; align-items: center; height: 16px; }
  .label { margin-left: 4px; }
  .hit { display: flex; align-items: center; height: 16px; }
  .picked .hit { background: #d9d9d9; }
  .vscroll { width: 17px; flex: none; display: flex; flex-direction: column; background: #f0f0f0; }
  .hscroll { height: 17px; display: flex; background: #f0f0f0; }
  .corner { width: 17px; }
  .thumb { background: #cdcdcd; }
  .vscroll .thumb { margin: 0 1px; }
  .hscroll .thumb { margin: 1px 0; }

  .work { flex: 1; min-width: 0; display: flex; flex-direction: column; }
  .parttools { height: 28px; flex: none; display: flex; align-items: center; gap: 7px; padding: 0 4px; box-sizing: border-box; background: linear-gradient(#fdfdfd, #f0f0f0); }
  .parttools .tool { gap: 3px; }
  .parttools .sep { margin: 0 -1px; }
  .parttools label { margin-left: -3px; }
  select { width: 62px; height: 22px; border: 0; margin: 0 -1px; padding: 0 2px; appearance: none; background: linear-gradient(#000, #000) no-repeat 54px 10px / 5px 1px, linear-gradient(#000, #000) no-repeat 55px 11px / 3px 1px, linear-gradient(#000, #000) no-repeat 56px 12px / 1px 1px, #fff; }
  .panes { flex: 1; min-height: 0; display: flex; gap: 3px; }
  .partlist { width: 184px; display: flex; flex-direction: column; gap: 1px; padding: 5px 0 2px; box-sizing: border-box; border-right: 1px solid #a0a0a0; }
  .find { display: flex; gap: 4px; height: 24px; flex: none; }
  .find input { width: 158px; border: 1px solid #888; background: #fff; padding: 0 2px 2px; }
  .find input::placeholder { color: #888; opacity: 1; }
  .find button { flex: 1; display: grid; place-items: center; background: #fff; }
  .partbox { flex: 1; min-height: 0; display: flex; border: 1px solid #828790; background: #fff; padding: 1px 1px 0 0; }
  .parts { flex: 1; overflow: hidden; }
  .parts .hit { padding: 0 5px 0 4px; gap: 8px; }
  .sel .hit { background: #316ac5; }
  .props { flex: 1; min-width: 0; display: flex; flex-direction: column; background: #fff; border-left: 1px solid #ccc; }
  .proptab { width: 62px; height: 20px; line-height: 19px; text-align: center; background: #fff; border-right: 1px solid #ccc; border-top: 1px solid #ddd; box-sizing: border-box; flex: none; }
  .propbox { flex: 1; min-height: 0; margin: 4px 4px 3px 3px; border: 1px solid #aaa; display: flex; align-items: stretch; overflow: hidden; }
  table { border-collapse: collapse; flex: 1; align-self: flex-start; table-layout: fixed; width: 100%; }
  table th { width: 21px; height: 18px; padding: 0; font-weight: 400; line-height: 18px; background: #f2f2f2; border: 1px solid #b8b8b8; border-left: 0; }
  table td { border-bottom: 1px solid #b8b8b8; padding: 0; }
  thead th { height: 22px; }
  thead th:last-child { width: auto; }
  .cur th { background: #ffcf87; }
  .cur td { background: #0078d7; }
  .plus { display: block; width: 11px; line-height: 11px; margin: 0 3px; border: 1px solid #999; font-style: normal; text-align: center; }

  .status { height: 21px; flex: none; display: flex; gap: 3px; background: #f8f8f8; }
  .status span { line-height: 20px; }
  .status > span { border: 1px solid #d4d4d4; padding: 0 1px; box-sizing: border-box; background: linear-gradient(#fdfdfd, #f1f1f1); }
  .c1 { width: 148px; }
  .c2 { width: 77px; }
  .c3 { width: 97px; }
  .c4 { width: 47px; }
  .c5 { flex: 1; }
  .c6 { width: 70px; }

  .taskbar { height: 40px; flex: none; display: flex; background: #020b0e; color: #fff; }
  .start { width: 48px; display: grid; place-items: center; background: #000; }
  .cortana { width: 344px; display: flex; align-items: center; gap: 5px; padding: 0 15px 0 9px; box-sizing: border-box; background: #333; }
  .cortana input { flex: 1; min-width: 0; border: 0; background: none; font-size: 14px; padding: 0; }
  .cortana input::placeholder { color: #969696; opacity: 1; }
  .apps { display: flex; }
  .apps button { width: 50px; display: grid; place-items: center; border-bottom: 3px solid transparent; border-top: 3px solid transparent; }
  .apps.second { margin-left: 7px; }
  .apps.second button { width: 48px; }
  .apps .run { background: linear-gradient(#76b9ed, #76b9ed) no-repeat 50% 100% / 40px 3px border-box; }
  .apps .run.on { background: linear-gradient(#76b9ed, #76b9ed) no-repeat 50% 100% / 48px 3px border-box, #343e42 border-box; }
  .tray { margin-left: auto; display: flex; align-items: center; gap: 9px; padding-right: 15px; line-height: 17px; }
  .two { text-align: center; }
  .link { margin-right: 10px; }
  .caret { margin: 0 1px 0 9px; }
  .time { margin: 0 11px 0 7px; }
  .ime { font-size: 13px; }
  .note { margin-top: 10px; }

  .editor { position: absolute; left: 402px; top: 132px; right: 22px; bottom: 65px; border: 1px solid #444; background: linear-gradient(#bccddd, #d7e4f2 30px); padding: 0 7px 7px 8px; box-sizing: border-box; display: flex; flex-direction: column; }
  .editor h2 { height: 30px; line-height: 36px; color: #8c939b; flex: none; }
  .client { flex: 1; min-height: 0; display: flex; flex-direction: column; background: #fff; }
  .tabs { display: flex; align-items: flex-end; height: 20px; flex: none; background: #f0f0f0; border-bottom: 1px solid #d8d8d8; }
  .tabs button { width: 38px; height: 18px; border: 1px solid #d4d4d4; border-bottom: 0; line-height: 18px; }
  .tabs .on { width: 45px; height: 20px; background: #fff; line-height: 20px; }
  .edit { flex: 1; min-height: 0; display: flex; flex-direction: column; margin: 3px 3px 2px; border-bottom: 1px solid #d0d0d0; }
  .edtools { height: 28px; flex: none; display: flex; align-items: center; gap: 7px; padding: 0 3px 2px; background: linear-gradient(#fdfdfd, #f0f0f0); border-top: 1px solid #e6e6e6; box-sizing: border-box; }
  .edtools .sep { margin: 0 -1px; }
  .edtools.coords { padding-bottom: 0; }
  .grip { width: 2px; height: 16px; background: repeating-linear-gradient(#b4b4b4 0 2px, transparent 2px 4px); }
  .radios { display: flex; gap: 11px; background: #f0f0f0; padding-right: 8px; margin-left: -4px; }
  .radios label { display: flex; align-items: center; gap: 8px; }
  .radios input { appearance: none; width: 11px; height: 11px; margin: 0; border: 1px solid #777; border-radius: 50%; background: #fff; }
  .radios input:checked { background: radial-gradient(#111 0 2.5px, #fff 3.5px); }
  .coords .sep + .axis { margin-left: -3px; }
  .spin { display: flex; align-items: center; width: 78px; height: 23px; border: 1px solid #777; box-sizing: border-box; padding-right: 2px; background: #f4f4f4; color: #808080; }
  .spin input { flex: 1; min-width: 0; border: 0; background: none; text-align: right; padding: 0 7px 0 0; }
  .unit { margin: 0 6px 0 -1px; }
  .canvas { flex: 1; min-height: 0; width: 100%; background: #000; }
  .grey text { fill: #c8c8c8; font: 12px 'Liberation Sans', sans-serif; text-anchor: middle; }
  .green text { fill: #0f0; font: 700 15px 'DejaVu Sans Mono', monospace; text-anchor: middle; }
  .dyn { height: 28px; flex: none; background: #f0f0f0; line-height: 28px; padding-left: 7px; }
  .edstatus { height: 22px; flex: none; margin-top: 2px; display: flex; border: 1px solid #ddd; border-width: 1px 0; box-sizing: border-box; background: linear-gradient(#fdfdfd, #f2f2f2); line-height: 21px; }
  .edstatus svg { align-self: flex-end; }
  .xy { width: 96px; border-right: 1px solid #ccc; padding-left: 4px; box-sizing: border-box; font-size: 11px; }
  .prompt { flex: 1; padding-left: 4px; }

  .dialog { position: absolute; left: 243px; top: 320px; width: 411px; height: 223px; box-sizing: border-box; border: 1px solid #2d87e2; background: #f0f0f0; box-shadow: 0 4px 14px #0006; display: flex; flex-direction: column; }
  .dialog header { height: 26px; display: flex; justify-content: space-between; align-items: center; background: #fff; padding: 0 9px 1px 3px; flex: none; box-sizing: border-box; }
  fieldset { margin: 13px 13px 0; padding: 0 9px 6px 7px; border: 1px solid #dcdcdc; min-width: 0; height: 66px; box-sizing: border-box; flex: none; }
  fieldset + fieldset { margin-top: 7px; }
  legend { padding: 0; height: 16px; line-height: 16px; display: block; }
  textarea { display: block; width: 100%; height: 41px; margin-top: 2px; resize: none; border: 1px solid #777; background: #fff; outline: 0; padding: 0 1px; }
  .dialog textarea { font: 10px/16px 'Liberation Mono', monospace; }
  .dialog textarea:focus { border-color: #5b7a9a; }
  textarea::selection { background: #0078d7; color: #fff; }
  .actions { display: flex; justify-content: flex-end; gap: 15px; padding: 12px 14px 0 0; }
  .actions button { width: 72px; height: 23px; border: 1px solid #adadad; background: #e1e1e1; }

  .sogou { position: absolute; left: 702px; top: 3px; height: 24px; display: flex; align-items: center; gap: 8px; width: 206px; box-sizing: border-box; border: 1px solid #b4c6dc; background: #fff; color: #1d76c8; }
  .sogou b { font-size: 15px; margin-left: -3px; }
  .slogo { margin: -4px 0 0 -2px; }
  .score { position: absolute; left: 1042px; top: -28px; width: 42px; height: 42px; border: 2px solid #ddd; border-radius: 50%; background: #3fc65c; box-shadow: 0 2px 6px #0006, inset 0 0 0 1px #2a9a44; color: #fff; font: 700 12px/66px 'Open Sans', sans-serif; text-align: center; }
  .mark { position: absolute; border: 3px solid #f00; box-sizing: border-box; pointer-events: none; }
  .one { left: 367px; top: 172px; width: 194px; height: 47px; }
  .two-m { left: 204px; top: 281px; width: 139px; height: 80px; }
</style>
